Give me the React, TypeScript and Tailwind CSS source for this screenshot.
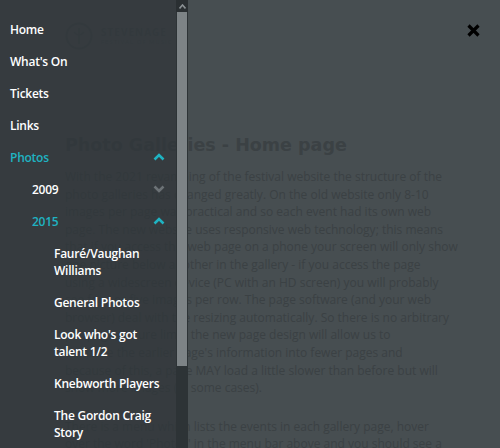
import React from 'react';

type Item = { label: string[]; level: number; active?: boolean; chevron?: 'up' | 'down' };

const items: Item[] = [
  { label: ['Home'], level: 0 },
  { label: ["What's On"], level: 0 },
  { label: ['Tickets'], level: 0 },
  { label: ['Links'], level: 0 },
  { label: ['Photos'], level: 0, active: true, chevron: 'up' },
  { label: ['2009'], level: 1, chevron: 'down' },
  { label: ['2015'], level: 1, active: true, chevron: 'up' },
  { label: ['Fauré/Vaughan', 'Williams'], level: 2 },
  { label: ['General Photos'], level: 2 },
  { label: ["Look who's got", 'talent 1/2'], level: 2 },
  { label: ['Knebworth Players'], level: 2 },
  { label: ['The Gordon Craig', 'Story'], level: 2 },
];

const paragraph1 = [
  'With the 2021 revamping of the festival website the structure of the',
  'photo galleries has changed greatly. On the old website only 8-10',
  'images per page was practical and so each event had its own web',
  'page. The new website uses responsive web technology; this means',
  'that if you access this web page on a phone your screen will only show',
  'one picture below another in the gallery - if you access the page',
  'using a widescreen device (PC with an HD screen) you will probably',
  'see four or five images per row. The page software (and your web',
  'browser) deal with the resizing automatically. So there is no arbitrary',
  'per page picture limit, the new page design will allow us to',
  "combine the earlier page's information into fewer pages and",
  'because of this, a page MAY load a little slower than before but will',
  'show more images (in some cases).',
];

const paragraph2 = [
  'There is a menu which lists the events in each gallery page, hover',
  "over the word 'Photos' in the menu bar above and you should see a",
];

const Chevron = ({ dir, active }: { dir: 'up' | 'down'; active?: boolean }) => (
  <svg width="12" height="8" viewBox="0 0 12 8" className={active ? 'text-[#1fb3c2]' : 'text-[#6c7276]'}>
    <path
      d={dir === 'up' ? 'M1.5 6.5 L6 2 L10.5 6.5' : 'M1.5 1.5 L6 6 L10.5 1.5'}
      fill="none"
      stroke="currentColor"
      strokeWidth="2.6"
    />
  </svg>
);

const Logo = () => (
  <div className="flex items-center gap-2 h-[30px]">
    <svg width="28" height="28" viewBox="0 0 28 28">
      <circle cx="14" cy="14" r="12.5" fill="none" stroke="#3e4548" strokeWidth="2" />
      <path d="M14 6 V22 M9 10 Q14 16 19 10" fill="none" stroke="#3e4548" strokeWidth="1.5" />
    </svg>
    <div className="flex flex-col leading-none text-[#3e4548]">
      <span className="text-[10px] font-bold tracking-[1px]">STEVENAGE</span>
      <span className="text-[6px] tracking-[1px] mt-[2px]">FESTIVAL OF MUSIC</span>
    </div>
  </div>
);

export default function App() {
  return (
    <div className="relative w-[500px] h-[448px] overflow-hidden bg-[#474e51] font-['Open_Sans',sans-serif]">
      {/* page behind the overlay */}
      <div className="pl-[65px] pt-[21px] text-[#3b4144]">
        <Logo />
        <h1 className="mt-[82px] text-[17.5px] leading-[24px] font-bold font-['DejaVu_Sans',sans-serif]">
          Photo Galleries - Home page
        </h1>
        <div className="mt-[11px] text-[12px] leading-[17.6px]">
          {paragraph1.map((l, i) => (
            <div key={i} className="whitespace-nowrap">{l}</div>
          ))}
          <div className="h-[21px]" />
          {paragraph2.map((l, i) => (
            <div key={i} className="whitespace-nowrap">{l}</div>
          ))}
        </div>
      </div>

      {/* close button */}
      <button className="absolute left-[467px] top-[24px] w-[13px] h-[13px]">
        <svg width="13" height="13" viewBox="0 0 13 13">
          <path d="M1.5 1.5 L11.5 11.5 M11.5 1.5 L1.5 11.5" stroke="#000" strokeWidth="3.2" />
        </svg>
      </button>

      {/* side drawer */}
      <div className="absolute left-0 top-0 h-full flex">
        <nav className="w-[176px] h-full bg-[#30363a]/75 text-[12px] leading-[17px] font-semibold tracking-[-0.25px]">
          <ul className="pt-[13px]">
            {items.map((it, i) => (
              <li
                key={i}
                className={`flex items-center justify-between py-[7.5px] pr-[11px] ${
                  it.level === 0 ? 'pl-[10px]' : it.level === 1 ? 'pl-[32px]' : 'pl-[54px]'
                } ${it.active ? 'text-[#1fb3c2]' : 'text-white'}`}
              >
                <span>
                  {it.label.map((l, j) => (
                    <div key={j}>{l}</div>
                  ))}
                </span>
                {it.chevron && <Chevron dir={it.chevron} active={it.active} />}
              </li>
            ))}
          </ul>
        </nav>
        <div className="w-[12px] h-full flex flex-col bg-[#2d3336]">
          <div className="h-[12px] bg-[#2a2f32] flex items-center justify-center">
            <svg width="7" height="5" viewBox="0 0 7 5">
              <path d="M0.5 4.5 L3.5 1 L6.5 4.5" fill="none" stroke="#8a9093" strokeWidth="1.6" />
            </svg>
          </div>
          <div className="h-[354px] bg-[#7d8386] mx-[1px]" />
        </div>
      </div>
    </div>
  );
}
